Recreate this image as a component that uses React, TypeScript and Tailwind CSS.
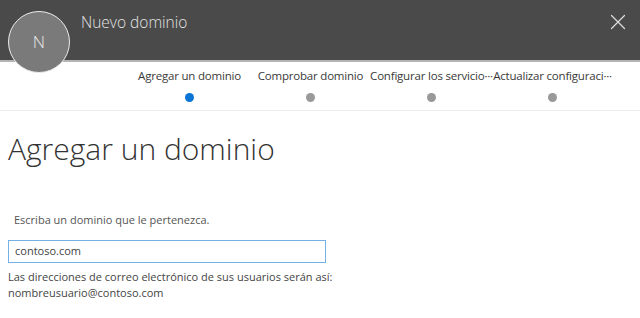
import { X } from 'lucide-react';

const steps = [
  { label: 'Agregar un dominio', active: true },
  { label: 'Comprobar dominio', active: false },
  { label: 'Configurar los servicio···', active: false },
  { label: 'Actualizar configuraci···', active: false },
];

export default function App() {
  return (
    <div className="w-[640px] h-[318px] bg-white overflow-hidden font-['Open_Sans',sans-serif] text-[#333]">
      {/* Header */}
      <div className="relative h-[62px] bg-[#4a4a4a] border-b-2 border-[#b4b4b4]">
        <div className="absolute left-[8px] top-[11px] w-[62px] h-[62px] rounded-full bg-[#7a7a7a] border-[1.5px] border-[#ececec] flex items-center justify-center">
          <span className="text-[17px] text-[#e6e6e6] font-light">N</span>
        </div>
        <div className="pl-[81px] pt-[11px] text-[15.5px] font-light text-[#e3e3e3]">Nuevo dominio</div>
        <button className="absolute right-[9px] top-[9px] text-[#dcdcdc]">
          <X className="w-[26px] h-[26px]" strokeWidth={1.2} />
        </button>
      </div>

      {/* Steps */}
      <div className="flex pl-[129px] pt-[5px] h-[49px] border-b border-[#ececec]">
        {steps.map((s) => (
          <div key={s.label} className="w-[121px] flex flex-col items-center">
            <div className="whitespace-nowrap text-center text-[11.5px] leading-[18px] text-[#3a3a3a] tracking-[-0.2px]">{s.label}</div>
            <div className={`mt-[8px] w-[9px] h-[9px] rounded-full ${s.active ? 'bg-[#0a74d6]' : 'bg-[#999]'}`} />
          </div>
        ))}
      </div>

      {/* Content */}
      <div className="px-[8px]">
        <h1 className="mt-[18px] text-[30px] leading-[40px] font-light text-[#333]">Agregar un dominio</h1>
        <div className="mt-[43px] pl-[6px] text-[11px] text-[#555]">Escriba un dominio que le pertenezca.</div>
        <div className="mt-[11px] w-[318px] h-[23px] border border-[#75b1e6] flex items-center px-[6px] text-[11px] text-[#444]">
          contoso.com
        </div>
        <div className="mt-[6px] text-[11px] leading-[16px] text-[#444]">
          Las direcciones de correo electrónico de sus usuarios serán así:
          <br />
          nombreusuario@contoso.com
        </div>
      </div>
    </div>
  );
}
